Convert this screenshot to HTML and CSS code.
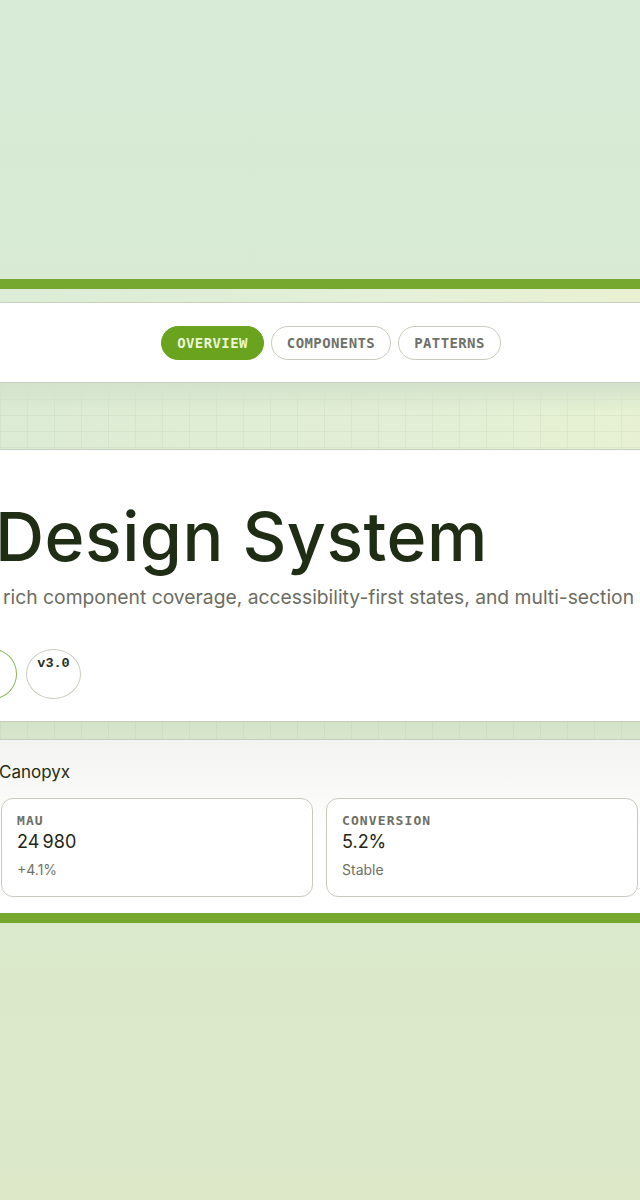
FILE: index.html
```html
<!DOCTYPE html>
<html lang="en">
<head>
<meta charset="utf-8">
<title>Canopyx Design System</title>
<link rel="stylesheet" href="styles.css">
</head>
<body>
<div class="page">
  <div class="top-space"></div>
  <div class="accent-bar"></div>
  <div class="thin-band"></div>
  <nav class="nav">
    <div class="tabs">
      <span class="tab tab-active">OVERVIEW</span>
      <span class="tab">COMPONENTS</span>
      <span class="tab">PATTERNS</span>
    </div>
  </nav>
  <div class="grid-band"></div>
  <header class="hero">
    <h1 class="title">Design System</h1>
    <p class="subtitle">rich component coverage, accessibility-first states, and multi-section</p>
    <div class="badges">
      <span class="badge badge-green"></span>
      <span class="badge">v3.0</span>
    </div>
  </header>
  <div class="grid-band small"></div>
  <section class="metrics">
    <div class="brand">Canopyx</div>
    <div class="cards">
      <div class="card">
        <div class="card-label">MAU</div>
        <div class="card-value">24&#8201;980</div>
        <div class="card-note">+4.1%</div>
      </div>
      <div class="card">
        <div class="card-label">CONVERSION</div>
        <div class="card-value">5.2%</div>
        <div class="card-note">Stable</div>
      </div>
    </div>
  </section>
  <div class="accent-bar"></div>
</div>
</body>
</html>
```

FILE: styles.css
```css
html, body {
  margin: 0;
  padding: 0;
}
body {
  min-height: 1200px;
  background: linear-gradient(180deg, #d7ebd6 0%, #d9ead0 50%, #dce8c8 100%);
  font-family: Inter, "Noto Sans", "Liberation Sans", sans-serif;
  overflow: hidden;
}
.page {
  display: flex;
  flex-direction: column;
}
.top-space {
  height: 279px;
}
.accent-bar {
  height: 10px;
  background: #76a72f;
}
.thin-band {
  height: 13px;
  background: linear-gradient(90deg, #dcecd6 0%, #e4f0d8 60%, #e9f1d2 100%);
  border-bottom: 1px solid #c8d0bf;
}
.nav {
  height: 79px;
  background: #ffffff;
  border-bottom: 1px solid #c9d0c0;
  display: flex;
  align-items: center;
  justify-content: center;
  padding-left: 22px;
}
.tabs {
  display: flex;
  gap: 7px;
}
.tab {
  height: 32px;
  padding: 0 15px;
  border: 1px solid #c9cbbd;
  border-radius: 17px;
  display: flex;
  align-items: center;
  font-family: "DejaVu Sans Mono", "Liberation Mono", monospace;
  font-weight: bold;
  font-size: 14px;
  letter-spacing: 0.4px;
  color: #6f716a;
  background: #ffffff;
}
.tab-active {
  background: #6aa31e;
  border-color: #6aa31e;
  color: #eaf6d6;
}
.grid-band {
  height: 66px;
  border-bottom: 1px solid #c5cdbc;
  background-color: #dce9d2;
  background-image:
    linear-gradient(180deg, #d3e2cb 0%, rgba(225, 238, 214, 0) 45%),
    linear-gradient(90deg, rgba(180, 200, 170, 0.2) 1px, transparent 1px),
    linear-gradient(180deg, rgba(180, 200, 170, 0.2) 1px, transparent 1px),
    linear-gradient(90deg, #dcebd4 0%, #e2efd6 60%, #e7f1d2 100%);
  background-size: 100% 100%, 27px 100%, 100% 16px, 100% 100%;
}
.grid-band.small {
  height: 17px;
  background-color: #d5e5c9;
  background-image:
    linear-gradient(90deg, rgba(180, 200, 170, 0.25) 1px, transparent 1px),
    linear-gradient(180deg, #d3e3c8 0%, #d8e7cc 100%);
  background-size: 27px 100%, 100% 100%;
}
.hero {
  background: #ffffff;
  border-bottom: 1px solid #c5cdbc;
  height: 272px;
  box-sizing: border-box;
  padding-top: 45px;
  overflow: hidden;
}
.title {
  margin: 0 0 0 -5px;
  font-size: 68px;
  font-weight: 500;
  line-height: 82px;
  letter-spacing: 0.5px;
  color: #1f2d14;
  white-space: nowrap;
}
.subtitle {
  margin: 8px 0 0 3px;
  font-size: 19.3px;
  line-height: 24px;
  color: #6c6d62;
  white-space: nowrap;
}
.badges {
  display: flex;
  gap: 9px;
  margin-top: 40px;
  margin-left: -31px;
}
.badge {
  width: 53px;
  height: 42px;
  padding-top: 6px;
  border: 1px solid #c9cbbd;
  border-radius: 50%;
  display: flex;
  justify-content: center;
  font-family: "Liberation Mono", "DejaVu Sans Mono", monospace;
  font-weight: bold;
  font-size: 13.5px;
  color: #2a2d26;
}
.badge-green {
  width: 46px;
  border-color: #88b45a;
}
.metrics {
  background: linear-gradient(180deg, #f3f4f1 0%, #ffffff 60%);
  padding: 21px 2px 16px 1px;
  height: 173px;
  box-sizing: border-box;
}
.brand {
  font-size: 17px;
  color: #1f2d14;
  line-height: 22px;
  margin-left: -2px;
}
.cards {
  display: grid;
  grid-template-columns: 1fr 1fr;
  gap: 13px;
  margin-top: 15px;
}
.card {
  height: 99px;
  box-sizing: border-box;
  border: 1px solid #c8cabb;
  border-radius: 12px;
  background: #ffffff;
  padding: 14px 15px;
}
.card-label {
  font-family: "DejaVu Sans Mono", "Liberation Mono", monospace;
  font-weight: bold;
  font-size: 13px;
  letter-spacing: 1.1px;
  color: #6d6f66;
  line-height: 16px;
}
.card-value {
  font-size: 18px;
  color: #1f2616;
  line-height: 24px;
  margin-top: 1px;
}
.card-note {
  font-size: 14px;
  color: #707166;
  line-height: 18px;
  margin-top: 7px;
}
```
